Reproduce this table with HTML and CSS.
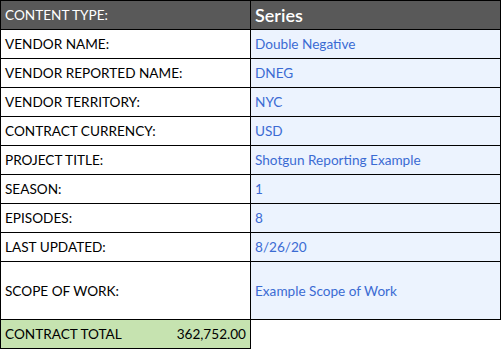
FILE: index.html
```html
<!DOCTYPE html>
<html>
<head>
<meta charset="utf-8">
<link rel="stylesheet" href="styles.css">
</head>
<body>
<table class="sheet">
  <tr class="head">
    <td class="label">CONTENT TYPE:</td>
    <td class="title">Series</td>
  </tr>
  <tr><td class="label">VENDOR NAME:</td><td class="value">Double Negative</td></tr>
  <tr><td class="label">VENDOR REPORTED NAME:</td><td class="value">DNEG</td></tr>
  <tr><td class="label">VENDOR TERRITORY:</td><td class="value">NYC</td></tr>
  <tr><td class="label">CONTRACT CURRENCY:</td><td class="value">USD</td></tr>
  <tr><td class="label">PROJECT TITLE:</td><td class="value">Shotgun Reporting Example</td></tr>
  <tr><td class="label">SEASON:</td><td class="value">1</td></tr>
  <tr><td class="label">EPISODES:</td><td class="value">8</td></tr>
  <tr><td class="label">LAST UPDATED:</td><td class="value">8/26/20</td></tr>
  <tr class="tall"><td class="label">SCOPE OF WORK:</td><td class="value">Example Scope of Work</td></tr>
  <tr class="total">
    <td class="label total-cell"><div class="total-inner"><span>CONTRACT TOTAL</span><span>362,752.00</span></div></td>
    <td class="empty"></td>
  </tr>
</table>
</body>
</html>
```
FILE: styles.css
```css
html, body {
  margin: 0;
  padding: 0;
  background: #ffffff;
}

body {
  font-family: Lato, "Noto Sans", sans-serif;
  font-size: 13.6px;
  color: #000;
}

.sheet {
  border-collapse: collapse;
  table-layout: fixed;
  width: 501px;
  margin: 0;
}

.sheet td {
  border: 1px solid #000;
  height: 29px;
  padding: 0 4px;
  box-sizing: border-box;
  vertical-align: middle;
  white-space: nowrap;
}

.sheet td.label {
  width: 250px;
  color: #000;
}

.sheet td.value {
  background: #ecf3fe;
  color: #3b6bd3;
}

.head td {
  background: #595959;
  color: #ffffff;
}

.head td.label {
  color: #ffffff;
}

.head td.title {
  font-size: 18px;
  font-weight: 600;
  color: #ffffff;
}

.tall td {
  height: 58px;
}

.total td.total-cell {
  background: #c6e3b0;
}

.total-inner {
  display: flex;
  justify-content: space-between;
}

.sheet td.empty {
  border: none;
  background: transparent;
}
```
